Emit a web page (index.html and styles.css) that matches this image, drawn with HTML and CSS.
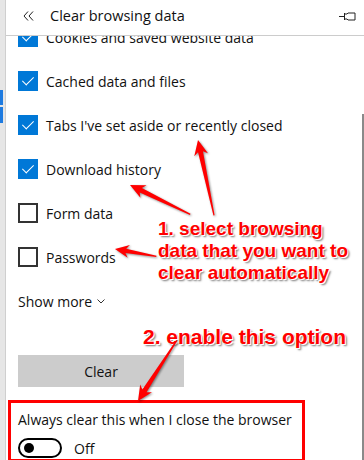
FILE: index.html
```html
<!DOCTYPE html>
<html lang="en">
<head>
  <meta charset="UTF-8" />
  <title>Clear browsing data</title>
  <link rel="stylesheet" href="styles.css">
</head>
<body>
  <div class="rail">
    <span class="rail-tab"></span>
    <span class="rail-tab tall"></span>
  </div>

  <div class="panel">
    <header class="panel-head">
      <svg class="back" width="12" height="10" viewBox="0 0 12 10">
        <path d="M5 0.5 L1 5 L5 9.5 M10 0.5 L6 5 L10 9.5" fill="none" stroke="#222" stroke-width="1"/>
      </svg>
      <h1>Clear browsing data</h1>
      <svg class="pin" width="17" height="10" viewBox="0 0 17 10">
        <path d="M0 4.5 H5 M5.5 1 V8 M5.5 2 H8 L9 1 H16 V8 H9 L8 7 H5.5" fill="none" stroke="#222" stroke-width="1"/>
      </svg>
    </header>

    <div class="panel-body">
      <ul class="options">
        <li class="option"><span class="box checked"></span>Cookies and saved website data</li>
        <li class="option"><span class="box checked"></span>Cached data and files</li>
        <li class="option"><span class="box checked"></span>Tabs I've set aside or recently closed</li>
        <li class="option"><span class="box checked"></span>Download history</li>
        <li class="option"><span class="box"></span>Form data</li>
        <li class="option"><span class="box"></span>Passwords</li>
      </ul>

      <div class="show-more">
        Show more
        <svg width="8" height="5" viewBox="0 0 8 5"><path d="M0.5 0.5 L4 4 L7.5 0.5" fill="none" stroke="#333" stroke-width="1"/></svg>
      </div>

      <button class="clear-btn">Clear</button>

      <div class="always-box">
        <p>Always clear this when I close the browser</p>
        <div class="toggle-row">
          <span class="toggle"><span class="knob"></span></span>
          <span>Off</span>
        </div>
      </div>
    </div>

    <div class="scroll-thumb"></div>
  </div>

  <!-- annotations drawn over the screenshot -->
  <div class="note note-one">1. select browsing<br>data that you want to<br>clear automatically</div>
  <div class="note note-two">2. enable this option</div>

  <svg class="arrows" width="364" height="460" viewBox="0 0 364 460">
    <g transform="translate(198 140) rotate(-102)">
      <polygon points="0,0 -15,-7 -12,-2.5 -77,-0.6 -77,0.6 -12,2.5 -15,7"/>
    </g>
    <g transform="translate(130 185) rotate(-154)">
      <polygon points="0,0 -15,-7 -12,-2.5 -67,-0.6 -67,0.6 -12,2.5 -15,7"/>
    </g>
    <g transform="translate(115 249) rotate(-170)">
      <polygon points="0,0 -14,-6.5 -11,-2.2 -42,-0.6 -42,0.6 -11,2.2 -14,6.5"/>
    </g>
    <g transform="translate(138 401) rotate(122.6)">
      <polygon points="0,0 -15,-7 -12,-2.5 -72,-0.6 -72,0.6 -12,2.5 -15,7"/>
    </g>
  </svg>
</body>
</html>
```

FILE: styles.css
```css
* {
  margin: 0;
  padding: 0;
  box-sizing: border-box;
}

body {
  width: 364px;
  height: 460px;
  overflow: hidden;
  display: flex;
  position: relative;
  background: #fff;
  color: #000;
  font-family: 'Open Sans', 'Noto Sans', sans-serif;
}

.rail {
  width: 6px;
  flex-shrink: 0;
  background: #e6e6e6;
  border-right: 1px solid #cfcfcf;
  display: flex;
  flex-direction: column;
  gap: 2px;
  padding-top: 90px;
}

.rail-tab {
  display: block;
  width: 3px;
  height: 15px;
  background: #1e7be0;
}

.rail-tab.tall {
  height: 16px;
}

.panel {
  flex: 1;
  position: relative;
  display: flex;
  flex-direction: column;
  overflow: hidden;
}

.panel-head {
  height: 36px;
  flex-shrink: 0;
  display: flex;
  align-items: center;
  padding: 0 8px 4px 17px;
  border-bottom: 1px solid #cccccc;
  background: #fff;
  position: relative;
  z-index: 1;
}

.panel-head h1 {
  font-size: 14.5px;
  font-weight: normal;
  margin-left: 15px;
  flex: 1;
  color: #111;
}

.pin {
  margin-top: 2px;
}

.panel-body {
  flex: 1;
  padding-left: 12px;
}

.options {
  list-style: none;
  margin-top: -21px;
}

.option {
  height: 44px;
  display: flex;
  align-items: center;
  gap: 8px;
  font-size: 14px;
  color: #111;
}

.box {
  width: 20px;
  height: 20px;
  border: 2px solid #333;
  flex-shrink: 0;
  position: relative;
}

.box.checked {
  background: #0078d7;
  border-color: #0078d7;
}

.box.checked::after {
  content: "";
  position: absolute;
  left: 5px;
  top: 1px;
  width: 5px;
  height: 10px;
  border: solid #fff;
  border-width: 0 1.5px 1.5px 0;
  transform: rotate(45deg);
}

.show-more {
  height: 44px;
  display: flex;
  align-items: center;
  gap: 5px;
  font-size: 14px;
  color: #111;
}

.clear-btn {
  display: block;
  width: 166px;
  height: 32px;
  margin-top: 32px;
  background: #cccccc;
  border: none;
  font-family: inherit;
  font-size: 14px;
  color: #111;
}

.always-box {
  width: 297px;
  height: 62px;
  margin: 13px 0 0 -10px;
  border: 3px solid #f00;
  padding: 7px 0 0 7px;
  font-size: 14px;
  color: #111;
}

.toggle-row {
  display: flex;
  align-items: center;
  gap: 12px;
  margin-top: 9px;
}

.toggle {
  width: 44px;
  height: 20px;
  border: 2px solid #000;
  border-radius: 10px;
  display: flex;
  align-items: center;
  padding-left: 4px;
}

.knob {
  width: 10px;
  height: 10px;
  border-radius: 50%;
  background: #000;
}

.scroll-thumb {
  position: absolute;
  right: 0;
  top: 114px;
  bottom: 0;
  width: 2px;
  background: #8a8a8a;
}

.note {
  position: absolute;
  color: #f00;
  font-family: 'Liberation Sans', Arial, sans-serif;
  font-weight: bold;
  font-size: 19px;
  line-height: 22px;
  text-shadow: 1px 1px 0 #fff, -1px -1px 0 #fff, 2px 2px 2px #777;
  white-space: nowrap;
}

.note-one {
  left: 158px;
  top: 218px;
}

.note-two {
  left: 143px;
  top: 325px;
  font-size: 21px;
  line-height: 24px;
}

.arrows {
  position: absolute;
  left: 0;
  top: 0;
  fill: #f00;
  filter: drop-shadow(1px 1px 1px rgba(0, 0, 0, 0.45));
}
```
